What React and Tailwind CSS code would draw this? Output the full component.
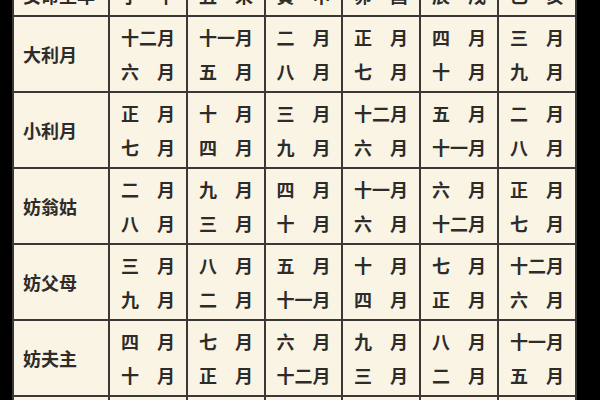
import React from "react";

const header = ["子午", "丑未", "寅申", "卯酉", "辰戌", "巳亥"];
const rows = [
  ["大利月", [["十二月", "六月"], ["十一月", "五月"], ["二月", "八月"], ["正月", "七月"], ["四月", "十月"], ["三月", "九月"]]],
  ["小利月", [["正月", "七月"], ["十月", "四月"], ["三月", "九月"], ["十二月", "六月"], ["五月", "十一月"], ["二月", "八月"]]],
  ["妨翁姑", [["二月", "八月"], ["九月", "三月"], ["四月", "十月"], ["十一月", "六月"], ["六月", "十二月"], ["正月", "七月"]]],
  ["妨父母", [["三月", "九月"], ["八月", "二月"], ["五月", "十一月"], ["十月", "四月"], ["七月", "正月"], ["十二月", "六月"]]],
  ["妨夫主", [["四月", "十月"], ["七月", "正月"], ["六月", "十二月"], ["九月", "三月"], ["八月", "二月"], ["十一月", "五月"]]],
  ["妨女身", [["五月", "十一月"], ["六月", "十二月"], ["七月", "正月"], ["八月", "二月"], ["九月", "三月"], ["十月", "四月"]]],
];

function Spread({ text }) {
  return (
    <div className="flex w-[54px] justify-between leading-[18px]">
      {text.split("").map((c, i) => (
        <span key={i}>{c}</span>
      ))}
    </div>
  );
}

export default function App() {
  return (
    <div
      className="w-[600px] h-[400px] bg-black overflow-hidden pl-[12px] text-[#2e2c2a]"
      style={{ fontFamily: '"Noto Sans CJK SC", "Noto Sans", sans-serif' }}
    >
      <div className="mt-[-27px] w-max grid grid-cols-[94px_76px_76px_75px_76px_76px_76px] grid-rows-[40px_74px_74px_74px_74px_74px_74px] gap-[2px] p-[2px] bg-[#3a3836] text-[18px] font-bold">
        <div className="bg-[#faf4e5] flex items-center pl-[9px] leading-[18px]">女命生年</div>
        {header.map((h) => (
          <div key={h} className="bg-[#faf4e5] flex items-center justify-center">
            <Spread text={h} />
          </div>
        ))}
        {rows.map(([label, cells]) => (
          <React.Fragment key={label}>
            <div className="bg-[#faf4e5] flex items-center pl-[9px] leading-[18px]">{label}</div>
            {cells.map((c, i) => (
              <div key={i} className="bg-[#faf4e5] flex flex-col items-center justify-center gap-[16px]">
                <Spread text={c[0]} />
                <Spread text={c[1]} />
              </div>
            ))}
          </React.Fragment>
        ))}
      </div>
    </div>
  );
}
